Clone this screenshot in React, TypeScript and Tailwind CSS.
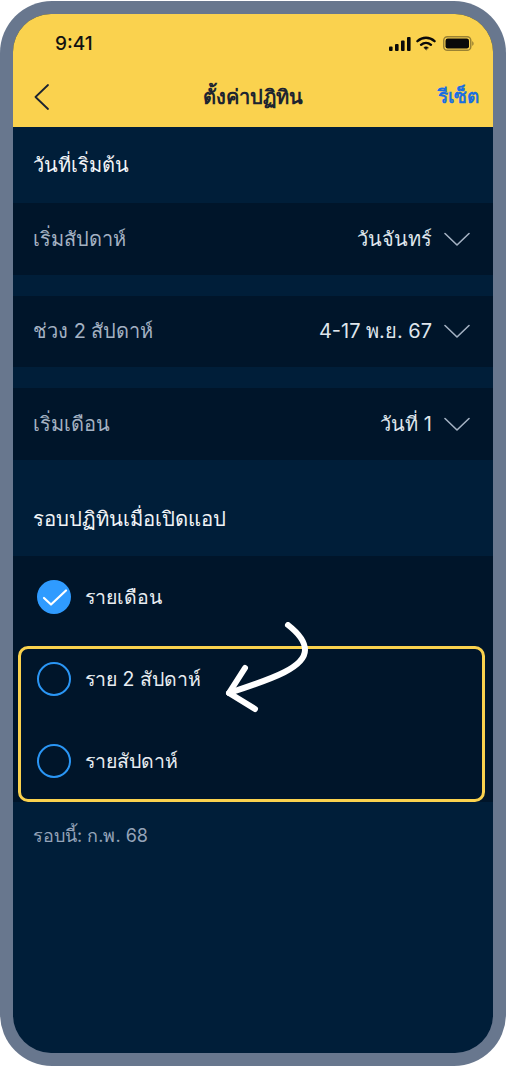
import React from 'react';

const font = { fontFamily: '"Inter", "Noto Sans", "DejaVu Sans", sans-serif' };

const Chevron = () => (
  <svg width="26" height="14" viewBox="0 0 26 14" fill="none" stroke="#a3b1c2" strokeWidth="1.6" strokeLinecap="round" strokeLinejoin="round">
    <path d="M1 1.5 L13 13 L25 1.5" />
  </svg>
);

const SelectRow = ({ label, value }: { label: string; value: string }) => (
  <div className="h-[71.5px] bg-[#00152a] flex items-center justify-between pl-5 pr-[23px]">
    <span className="text-[20px] text-[#a3b1c2]">{label}</span>
    <div className="flex items-center gap-3">
      <span className="text-[20px] text-[#dfe5ec]">{value}</span>
      <Chevron />
    </div>
  </div>
);

const Radio = ({ label, checked }: { label: string; checked?: boolean }) => (
  <div className="h-[82px] flex items-center pl-6 gap-[14px]">
    {checked ? (
      <svg width="34" height="34" viewBox="0 0 34 34">
        <circle cx="17" cy="17" r="17" fill="#2f9bff" />
        <path d="M7 18 L14 24.5 L29 10.5" fill="none" stroke="#fff" strokeWidth="2.2" strokeLinecap="round" strokeLinejoin="round" />
      </svg>
    ) : (
      <div className="w-[34px] h-[34px] rounded-full border-2 border-[#2a96f5]" />
    )}
    <span className="text-[19.5px] text-[#e8edf2] pt-[2px]">{label}</span>
  </div>
);

export default function App() {
  return (
    <div className="w-[506px] h-[1066px] bg-white pt-px" style={font}>
      <div className="h-[1065px] bg-[#68778e] rounded-[52px] p-[13px]">
        <div className="relative h-[1039px] bg-[#001e39] rounded-[38px] overflow-hidden">
          {/* Header */}
          <div className="h-[113px] bg-[#fad24e]">
            <div className="h-[53px] flex items-end justify-between pl-[42px] pr-[19px] pb-[14px]">
              <span className="text-[19px] font-medium text-[#111] leading-none">9:41</span>
              <div className="flex items-center gap-[5px] pb-[2px]">
                <svg width="22" height="14" viewBox="0 0 22 14" fill="#0a0a0a">
                  <rect x="0" y="9.5" width="3.6" height="4.5" rx="1" />
                  <rect x="6" y="7" width="3.6" height="7" rx="1" />
                  <rect x="12" y="3.5" width="3.6" height="10.5" rx="1" />
                  <rect x="18" y="0" width="3.6" height="14" rx="1" />
                </svg>
                <svg width="20" height="15" viewBox="0 0 20 15" fill="none" stroke="#0a0a0a" strokeLinecap="round">
                  <path d="M1.5 5.2 C6.5 0.6 13.5 0.6 18.5 5.2" strokeWidth="2.4" />
                  <path d="M5 8.8 C8 6.2 12 6.2 15 8.8" strokeWidth="2.4" />
                  <path d="M10 13.6 L7.8 11.6 C9 10.6 11 10.6 12.2 11.6 Z" fill="#0a0a0a" strokeWidth="0.6" />
                </svg>
                <svg width="31" height="15" viewBox="0 0 31 15" className="ml-[2px]">
                  <rect x="0.75" y="0.75" width="27" height="13.5" rx="3.6" fill="none" stroke="#0a0a0a" strokeOpacity="0.4" strokeWidth="1.5" />
                  <rect x="2.5" y="2.5" width="23.5" height="10" rx="2.2" fill="#0a0a0a" />
                  <path d="M29.2 5.2 C30.2 5.6 30.6 6.4 30.6 7.5 C30.6 8.6 30.2 9.4 29.2 9.8 Z" fill="#0a0a0a" fillOpacity="0.4" />
                </svg>
              </div>
            </div>
            <div className="relative h-[60px] flex items-center justify-between pl-[21px] pr-[14px]">
              <svg width="15" height="26" viewBox="0 0 15 26" fill="none" stroke="#1c2430" strokeWidth="1.8" strokeLinecap="round" strokeLinejoin="round">
                <path d="M14 1 L1.5 13 L14 25" />
              </svg>
              <span className="absolute left-0 right-0 text-center text-[20px] font-semibold text-[#1c2430]">ตั้งค่าปฏิทิน</span>
              <span className="text-[19px] font-semibold text-[#1a6fe0]">รีเซ็ต</span>
            </div>
          </div>

          {/* Start date */}
          <div className="h-[76px] flex items-center pl-5">
            <span className="text-[20px] font-medium text-[#f1f4f7]">วันที่เริ่มต้น</span>
          </div>
          <div className="flex flex-col gap-[21px]">
            <SelectRow label="เริ่มสัปดาห์" value="วันจันทร์" />
            <SelectRow label="ช่วง 2 สัปดาห์" value="4-17 พ.ย. 67" />
            <SelectRow label="เริ่มเดือน" value="วันที่ 1" />
          </div>

          {/* App open cycle */}
          <div className="h-[96.5px] flex items-end pl-5 pb-[22px]">
            <span className="text-[20.3px] font-medium text-[#f1f4f7]">รอบปฏิทินเมื่อเปิดแอป</span>
          </div>
          <div className="h-[246px] bg-[#00152a]">
            <Radio label="รายเดือน" checked />
            <Radio label="ราย 2 สัปดาห์" />
            <Radio label="รายสัปดาห์" />
          </div>
          <div className="pl-5 pt-[20px] text-[18px] text-[#94a3b8]">รอบนี้: ก.พ. 68</div>

          {/* Highlight box */}
          <div className="absolute left-[5px] top-[632px] w-[467px] h-[156px] rounded-[10px] border-[3px] border-[#fad24e]" />
          {/* Arrow */}
          <svg className="absolute left-[212px] top-[608px]" width="86" height="94" viewBox="0 0 86 94" fill="none" stroke="#fff" strokeWidth="6" strokeLinecap="round" strokeLinejoin="round">
            <path d="M63 3 C72 10 80 18 80 28 C80 45 50 56 4 71" />
            <path d="M20 46 L4 71 L30 87" />
          </svg>
        </div>
      </div>
    </div>
  );
}
